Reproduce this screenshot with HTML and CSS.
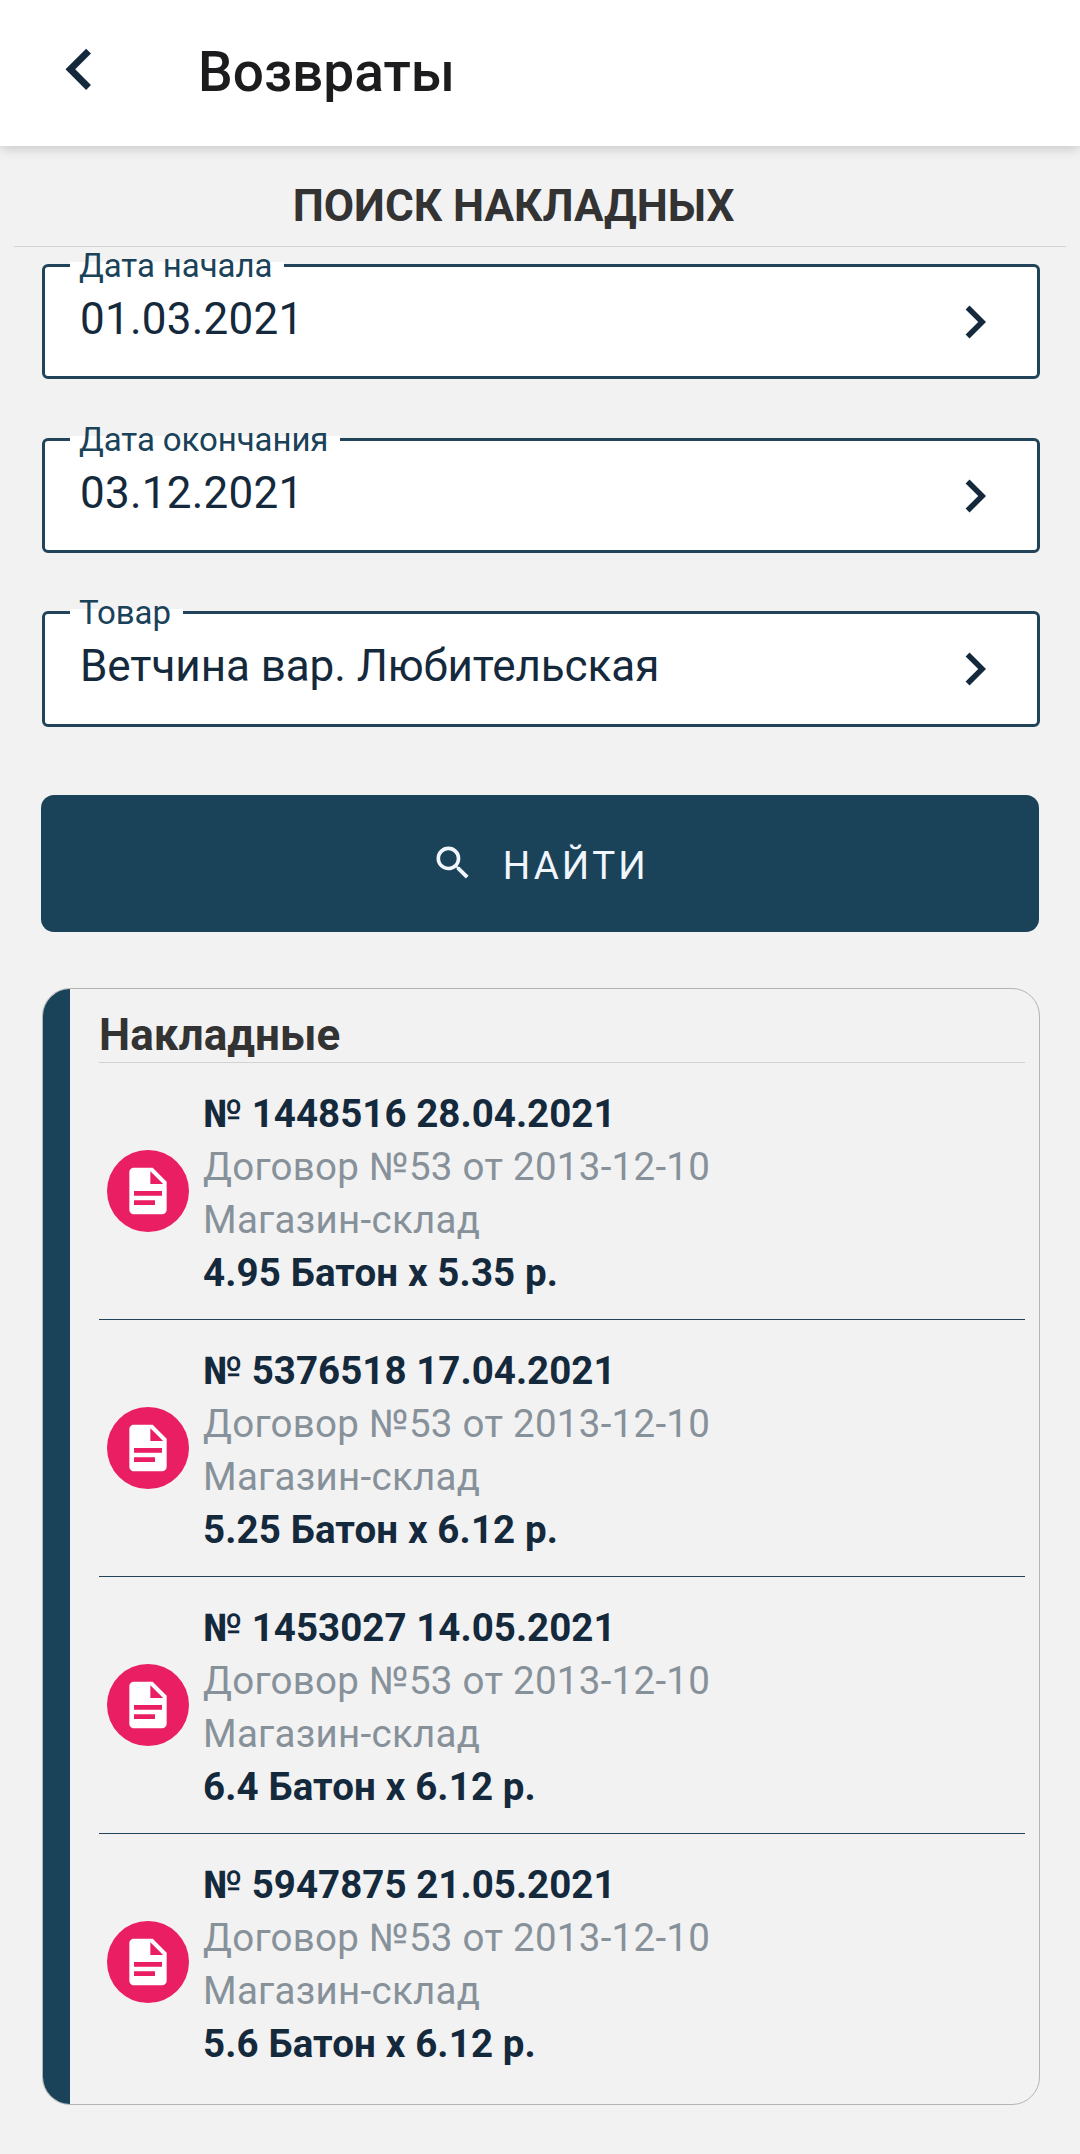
FILE: index.html
```html
<!DOCTYPE html>
<html lang="ru">
<head>
<meta charset="utf-8">
<title>Возвраты</title>
<link rel="stylesheet" href="styles.css">
</head>
<body>
<svg class="sprite" aria-hidden="true">
  <symbol id="chevron-left" viewBox="0 0 24 24"><path d="M15.41,16.58L10.83,12L15.41,7.41L14,6L8,12L14,18L15.41,16.58Z"/></symbol>
  <symbol id="chevron-right" viewBox="0 0 24 24"><path d="M8.59,16.58L13.17,12L8.59,7.41L10,6L16,12L10,18L8.59,16.58Z"/></symbol>
  <symbol id="magnify" viewBox="0 0 24 24"><path d="M9.5,3A6.5,6.5 0 0,1 16,9.5C16,11.11 15.41,12.59 14.44,13.73L14.71,14H15.5L20.5,19L19,20.5L14,15.5V14.71L13.73,14.44C12.59,15.41 11.11,16 9.5,16A6.5,6.5 0 0,1 3,9.5A6.5,6.5 0 0,1 9.5,3M9.5,5C7,5 5,7 5,9.5C5,12 7,14 9.5,14C12,14 14,12 14,9.5C14,7 12,5 9.5,5Z"/></symbol>
  <symbol id="document" viewBox="0 0 24 24"><path d="M13,9H18.5L13,3.5V9M6,2H14L20,8V20A2,2 0 0,1 18,22H6C4.89,22 4,21.1 4,20V4C4,2.89 4.89,2 6,2M15,18V16H6V18H15M18,14V12H6V14H18Z"/></symbol>
</svg>

<header class="topbar">
  <svg class="back"><use href="#chevron-left"/></svg>
  <h1 class="topbar-title">Возвраты</h1>
</header>

<main>
  <h2 class="search-title">ПОИСК НАКЛАДНЫХ</h2>

  <div class="fields">
    <div class="field">
      <span class="field-label">Дата начала</span>
      <span class="field-value date">01.03.2021</span>
      <svg class="field-arrow"><use href="#chevron-right"/></svg>
    </div>
    <div class="field">
      <span class="field-label">Дата окончания</span>
      <span class="field-value date">03.12.2021</span>
      <svg class="field-arrow"><use href="#chevron-right"/></svg>
    </div>
    <div class="field">
      <span class="field-label">Товар</span>
      <span class="field-value">Ветчина вар. Любительская</span>
      <svg class="field-arrow"><use href="#chevron-right"/></svg>
    </div>
  </div>

  <button class="find" type="button">
    <svg class="find-icon"><use href="#magnify"/></svg>
    <span class="find-text">НАЙТИ</span>
  </button>

  <section class="card">
    <div class="stripe"></div>
    <div class="card-body">
      <h3 class="card-title">Накладные</h3>
      <div class="row">
        <div class="badge"><svg class="badge-icon"><use href="#document"/></svg></div>
        <div class="row-text">
          <p class="number">№ 1448516 28.04.2021</p>
          <p class="muted">Договор №53 от 2013-12-10</p>
          <p class="muted">Магазин-склад</p>
          <p class="amount">4.95 Батон x 5.35 р.</p>
        </div>
      </div>
      <div class="row">
        <div class="badge"><svg class="badge-icon"><use href="#document"/></svg></div>
        <div class="row-text">
          <p class="number">№ 5376518 17.04.2021</p>
          <p class="muted">Договор №53 от 2013-12-10</p>
          <p class="muted">Магазин-склад</p>
          <p class="amount">5.25 Батон x 6.12 р.</p>
        </div>
      </div>
      <div class="row">
        <div class="badge"><svg class="badge-icon"><use href="#document"/></svg></div>
        <div class="row-text">
          <p class="number">№ 1453027 14.05.2021</p>
          <p class="muted">Договор №53 от 2013-12-10</p>
          <p class="muted">Магазин-склад</p>
          <p class="amount">6.4 Батон x 6.12 р.</p>
        </div>
      </div>
      <div class="row">
        <div class="badge"><svg class="badge-icon"><use href="#document"/></svg></div>
        <div class="row-text">
          <p class="number">№ 5947875 21.05.2021</p>
          <p class="muted">Договор №53 от 2013-12-10</p>
          <p class="muted">Магазин-склад</p>
          <p class="amount">5.6 Батон x 6.12 р.</p>
        </div>
      </div>
    </div>
  </section>
</main>
</body>
</html>
```
FILE: styles.css
```css
* {
  box-sizing: border-box;
  margin: 0;
  padding: 0;
}

body {
  min-height: 2154px;
  background: #f2f2f2;
  color: #14293c;
  font-family: Roboto, sans-serif;
}

svg {
  display: block;
  flex: none;
  fill: currentColor;
}

.sprite {
  display: none;
}

/* Top bar */
.topbar {
  display: flex;
  align-items: center;
  gap: 78px;
  height: 146px;
  padding-left: 37.5px;
  background: #fff;
  box-shadow: 0 2px 12px rgba(0, 0, 0, 0.2);
}

.back {
  width: 82.5px;
  height: 82.5px;
  margin-top: -8px;
}

.topbar-title {
  margin-top: -2px;
  color: #1c1c1e;
  font-size: 55px;
  font-weight: 500;
  line-height: 64px;
}

/* Search form */
.search-title {
  margin: 21px 14px 0;
  padding-right: 53px;
  border-bottom: 1px solid #d2d2d2;
  color: #333;
  font-size: 44px;
  font-weight: 700;
  line-height: 79px;
  text-align: center;
}

.fields {
  display: flex;
  flex-direction: column;
  gap: 58.6px;
  padding: 17px 40px 0 42px;
}

.field {
  position: relative;
  display: flex;
  align-items: center;
  justify-content: space-between;
  height: 115px;
  padding: 0 29px 0 35px;
  border: 3px solid #22445a;
  border-radius: 6px;
  background: #fff;
}

.field + .field {
  height: 115.6px;
}

.field + .field + .field {
  margin-top: -0.6px;
}

/* The label interrupts the top border of its field */
.field-label {
  position: absolute;
  top: -5px;
  left: 25px;
  padding: 0 12px 0 9px;
  background: #fff;
  color: #1a4259;
  font-size: 33px;
  letter-spacing: -0.08px;
  line-height: 7px;
  white-space: nowrap;
}

.field-value {
  margin-top: -5px;
  font-size: 44px;
  letter-spacing: -0.07px;
  line-height: 52px;
}

.field-value.date {
  letter-spacing: 0.25px;
}

.field-arrow {
  width: 66px;
  height: 66px;
  margin-top: 1px;
}

.find {
  display: flex;
  align-items: center;
  justify-content: center;
  gap: 27.5px;
  width: 998px;
  height: 137px;
  margin: 68px 0 0 41px;
  border: 0;
  border-radius: 13px;
  background: #1a4259;
  color: #f1f6fc;
  font: 400 38.5px/46px Roboto, sans-serif;
  letter-spacing: 3px;
}

.find-icon {
  width: 44px;
  height: 44px;
}

.find-text {
  margin-top: 5px;
}

/* Invoices */
.card {
  display: flex;
  height: 1117px;
  margin: 56px 40px 0 42px;
  overflow: hidden;
  border: 1px solid #b4b4b4;
  border-radius: 28px;
}

.stripe {
  flex: none;
  width: 27px;
  background: #1a4259;
}

.card-body {
  flex: 1;
  padding: 19px 14px 0 29px;
}

.card-title {
  border-bottom: 1px solid #d2d2d2;
  color: #333;
  font-size: 44px;
  font-weight: 700;
  letter-spacing: 0.1px;
  line-height: 54px;
}

.row {
  display: flex;
  align-items: center;
  gap: 14px;
  height: 257px;
  padding-left: 8px;
  border-bottom: 1px solid #22445a;
}

.row:last-child {
  border-bottom: 0;
}

.badge {
  display: flex;
  align-items: center;
  justify-content: center;
  width: 82px;
  height: 82px;
  border-radius: 50%;
  background: #e91e63;
  color: #fff;
}

.badge-icon {
  width: 56px;
  height: 56px;
}

.row-text {
  margin-top: 4px;
  font-size: 38.5px;
  line-height: 53px;
}

.number {
  font-weight: 700;
  letter-spacing: 0.04px;
}

.muted {
  color: #87919a;
  letter-spacing: 0.28px;
}

.amount {
  font-weight: 700;
  letter-spacing: 0.13px;
}
```
